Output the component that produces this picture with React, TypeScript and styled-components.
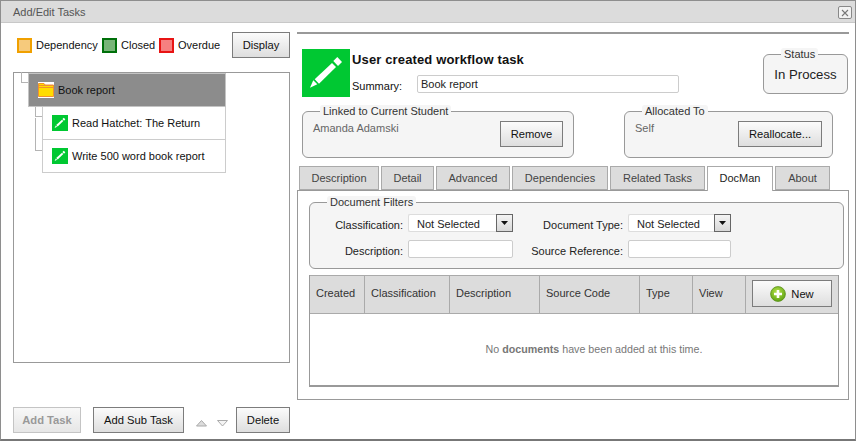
import React from "react";
import styled, { createGlobalStyle } from "styled-components";

const Global = createGlobalStyle`
  html, body { margin: 0; padding: 0; background: #fff; }
  * { box-sizing: border-box; }
  body { font-family: "Liberation Sans", Arial, sans-serif; font-size: 11px; color: #111; }
`;
const Win = styled.div`
  width: 856px; height: 441px; display: flex; flex-direction: column; overflow: hidden;
  border-left: 1px solid #8e8e8e; border-right: 1px solid #8e8e8e; border-top: 1px solid #8e8e8e; border-bottom: 2px solid #777;
  background: #fff;
`;
const TitleBar = styled.div`
  height: 22px; flex: none; background: #dcdcdc; border-bottom: 1px solid #c8c8c8; display: flex; align-items: center; justify-content: space-between;
  padding: 0 3px 0 12px; color: #555; font-size: 11px;
`;
const CloseBtn = styled.div`
  width: 14px; height: 13px; margin-top: 2px; border: 1px solid #888; border-radius: 2px; background: #f2f2f2; display: flex; align-items: center; justify-content: center;
`;
const Main = styled.div` flex: 1; display: flex; padding: 9px 0 0 12px; gap: 7px; min-height: 0; `;
const LeftCol = styled.div` width: 277px; flex: none; display: flex; flex-direction: column; `;
const LegendRow = styled.div` height: 26px; display: flex; align-items: center; padding-left: 4px; `;
const Swatch = styled.span<{ $b: string; $f: string }>`
  width: 15px; height: 15px; margin-right: 4px; border: 2px solid ${p => p.$b}; background: ${p => p.$f}; flex: none;
`;
const LegendText = styled.span<{ $w: number }>` width: ${p => p.$w}px; flex: none; white-space: nowrap; `;
const Btn = styled.button<{ $w: number; $h?: number; $disabled?: boolean }>`
  width: ${p => p.$w}px; height: ${p => p.$h ?? 26}px; flex: none; padding: 0; font: 11.2px "Liberation Sans", Arial, sans-serif;
  color: ${p => (p.$disabled ? "#999" : "#111")}; font-weight: ${p => (p.$disabled ? 700 : 400)};
  border: 1px solid ${p => (p.$disabled ? "#c4c4c4" : "#7c7c7c")};
  background: ${p => (p.$disabled ? "linear-gradient(#f8f8f8,#e6e6e6)" : "linear-gradient(#fbfbfb,#dedede)")};
  display: flex; align-items: center; justify-content: center; gap: 5px;
`;
const Tree = styled.div` margin-top: 14px; height: 291px; border: 1px solid #999; flex: none; `;
const RootNode = styled.div`
  position: relative; margin-left: 14px; width: 198px; height: 34px; background: #8c8c8c; border: 1px solid #c4c4c4;
  display: flex; align-items: center; padding: 0 0 1px 9px; gap: 4px; color: #111;
`;
const ChildNode = styled.div`
  position: relative; margin-left: 28px; width: 184px; height: 33px; border: 1px solid #ccc; border-top: none;
  display: flex; align-items: center; padding: 0 0 1px 9px; gap: 4px; color: #111;
`;
const Elbow = styled.span<{ $h: number; $b: number }>`
  position: absolute; left: -8px; bottom: ${p => p.$b}px; width: 7px; height: ${p => p.$h}px; border-left: 1px solid #b4b4b4; border-bottom: 1px solid #b4b4b4;
`;
const BottomBar = styled.div` margin-top: 44px; display: flex; align-items: center; `;
const BarGap = styled.div` width: 12px; flex: none; `;
const Arrows = styled.div` display: flex; gap: 10px; margin: 6px 8px 0 12px; `;
const RightCol = styled.div` width: 552px; flex: none; border-top: 2px solid #999; display: flex; flex-direction: column; `;
const Header = styled.div` height: 49px; margin-top: 14px; padding-left: 5px; display: flex; `;
const BigIcon = styled.div` width: 48px; height: 48px; margin-top: 1px; flex: none; background: #00c832; display: flex; `;
const HeadMain = styled.div` width: 413px; flex: none; padding-left: 2px; `;
const Title = styled.div` margin-top: 4px; font-size: 13px; font-weight: 700; color: #111; line-height: 16px; letter-spacing: .14px; `;
const SummaryRow = styled.div` margin-top: 7px; display: flex; align-items: center; height: 18px; `;
const SummaryLabel = styled.span` width: 65px; flex: none; padding-top: 4px; `;
const TextBox = styled.div<{ $w: number }>`
  width: ${p => p.$w}px; height: 18px; background: #fff; border: 1px solid #ccc; border-radius: 2px; padding-left: 3px; line-height: 16px; flex: none; color: #222;
`;
const Group = styled.fieldset<{ $w: number; $h: number; $ml?: number }>`
  width: ${p => p.$w}px; height: ${p => p.$h}px; margin: 0 0 0 ${p => p.$ml ?? 0}px; padding: 0; min-width: 0; flex: none;
  border: 1px solid #999; border-radius: 6px; background: #f5f5f5; color: #444;
`;
const GroupLegend = styled.legend<{ $ml?: number }>`
  margin-left: ${p => p.$ml ?? 17}px; padding: 0 3px; font-size: 11px; line-height: 13px; color: #333; background: #f5f5f5; border-radius: 3px;
`;
const StatusValue = styled.div` font-size: 13.2px; text-align: center; color: #222; margin-top: 6px; `;
const LinkRow = styled.div` margin-top: 8px; display: flex; `;
const GroupBody = styled.div` display: flex; justify-content: space-between; padding: 0 10px; `;
const GroupText = styled.span` padding-top: 4px; color: #666; `;
const GroupBtn = styled.div` margin-top: 3px; `;
const Tabs = styled.div` margin-top: 8px; padding-left: 2px; display: flex; gap: 2px; height: 25px; position: relative; z-index: 1; `;
const Tab = styled.div<{ $w: number; $active?: boolean }>`
  width: ${p => p.$w}px; height: ${p => (p.$active ? 25 : 24)}px; flex: none; text-align: center; line-height: 22px; color: ${p => (p.$active ? "#222" : "#444")};
  background: ${p => (p.$active ? "#fff" : "#dcdcdc")}; border: 1px solid #aaa; border-bottom: ${p => (p.$active ? "none" : "1px solid #aaa")};
`;
const Panel = styled.div`
  margin-top: -1px; height: 210px; border: 1px solid #999; padding: 5px 0 0 11px;
`;
const FilterGrid = styled.div`
  display: grid; grid-template-columns: 93px 105px 105px 103px; column-gap: 5px; row-gap: 8px; margin-top: 5px; align-items: center; grid-auto-rows: 18px;
`;
const FilterLabel = styled.span` text-align: right; white-space: nowrap; color: #222; padding-top: 3px; `;
const Select = styled.div`
  height: 18px; background: #fff; border: 1px solid #ddd; border-right: none; border-radius: 2px; padding-left: 8px; line-height: 18px; display: flex; justify-content: space-between; color: #222;
`;
const SelectArrow = styled.span`
  width: 17px; height: 18px; margin-top: -1px; flex: none; background: linear-gradient(#f4f4f4,#d8d8d8); border: 1px solid #666; display: flex; align-items: center; justify-content: center;
`;
const Table = styled.div` margin-top: 6px; width: 530px; height: 112px; border: 1px solid #999; border-bottom: 2px solid #999; border-top: 0; display: flex; flex-direction: column; `;
const THead = styled.div` height: 39px; background: #dcdcdc; display: flex; flex: none; `;
const Th = styled.div<{ $w: number }>`
  width: ${p => p.$w}px; flex: none; border-right: 1px solid #aaa; border-top: 1px solid #aaa; border-bottom: 1px solid #aaa; padding-left: 6px; line-height: 35px; color: #333; white-space: nowrap;
`;
const ThAction = styled.div`
  flex: 1; border-top: 1px solid #aaa; border-bottom: 1px solid #aaa; padding: 4px 0 0 6px;
`;
const Empty = styled.div` flex: 1; display: flex; align-items: center; justify-content: center; color: #777; font-size: 10.7px; padding: 0 0 1px 40px; `;
const BadgeIcon = styled.span` width: 16px; height: 16px; flex: none; background: #00c832; display: flex; `;

const Pencil = ({ s }: { s: number }) => (
  <svg width={s} height={s} viewBox="0 0 48 48">
    <path d="M8 38.7 L11.3 31.3 L15.3 35.3 Z" fill="#fff" />
    <path d="M12.7 30.3 L30 14 L34 18 L17 34.7 Z" fill="#fff" />
    <path d="M31.3 12 L35.3 8 L40 13 L36 17 Z" fill="#fff" />
  </svg>
);
const Folder = () => (
  <svg width="16" height="16" viewBox="0 0 16 16" style={{ flex: "none" }}>
    <rect width="16" height="16" fill="#fff" />
    <path d="M0.5 1.5 H6 L7 3 H15.5 V14.5 H0.5 Z" fill="#ffdc00" stroke="#f09030" />
    <path d="M0.5 3.5 H15.5 M0.5 5.5 H15.5" stroke="#f09030" fill="none" />
  </svg>
);
const Tri = ({ down }: { down?: boolean }) => (
  <svg width="11" height="7" viewBox="0 0 11 7">
    <path d={down ? "M0.5 0.5 H10.5 L5.5 6 Z" : "M0.5 6 H10.5 L5.5 0.5 Z"} fill={down ? "#f4f4f4" : "#dcdcdc"} stroke="#aaa" />
  </svg>
);
const PlusIcon = () => (
  <svg width="16" height="16" viewBox="0 0 16 16">
    <defs>
      <radialGradient id="pg" cx="0.45" cy="0.35" r="0.7"><stop offset="0" stopColor="#b5e34a" /><stop offset="1" stopColor="#5a9f10" /></radialGradient>
    </defs>
    <circle cx="8" cy="8" r="7.4" fill="url(#pg)" stroke="#5b8f1c" strokeWidth=".8" />
    <path d="M8 4 V12 M4 8 H12" stroke="#fff" strokeWidth="2.6" />
  </svg>
);
const ArrowGlyph = () => (
  <svg width="7" height="4" viewBox="0 0 7 4"><path d="M0 0 H7 L3.5 4 Z" fill="#111" /></svg>
);

export default function App() {
  return (
    <Win>
      <Global />
      <TitleBar>
        <span>Add/Edit Tasks</span>
        <CloseBtn>
          <svg width="8" height="8" viewBox="0 0 8 8"><path d="M1 1 L7 7 M7 1 L1 7" stroke="#777" strokeWidth="1.1" /></svg>
        </CloseBtn>
      </TitleBar>
      <Main>
        <LeftCol>
          <LegendRow>
            <Swatch $b="#f0a000" $f="#f6ca7c" />
            <LegendText $w={66}>Dependency</LegendText>
            <Swatch $b="#00700a" $f="#78b578" />
            <LegendText $w={38}>Closed</LegendText>
            <Swatch $b="#e81414" $f="#f68080" />
            <LegendText $w={54}>Overdue</LegendText>
            <Btn $w={58}>Display</Btn>
          </LegendRow>
          <Tree>
            <RootNode>
              <Elbow $h={11} $b={23} />
              <Folder />
              <span>Book report</span>
            </RootNode>
            <ChildNode>
              <Elbow $h={10} $b={22} />
              <BadgeIcon><Pencil s={16} /></BadgeIcon>
              <span>Read Hatchet: The Return</span>
            </ChildNode>
            <ChildNode>
              <Elbow $h={33} $b={21} />
              <BadgeIcon><Pencil s={16} /></BadgeIcon>
              <span>Write 500 word book report</span>
            </ChildNode>
          </Tree>
          <BottomBar>
            <Btn $w={68} $disabled>Add Task</Btn>
            <BarGap />
            <Btn $w={91}>Add Sub Task</Btn>
            <Arrows><Tri /><Tri down /></Arrows>
            <Btn $w={54}>Delete</Btn>
          </BottomBar>
        </LeftCol>
        <RightCol>
          <Header>
            <BigIcon><Pencil s={48} /></BigIcon>
            <HeadMain>
              <Title>User created workflow task</Title>
              <SummaryRow>
                <SummaryLabel>Summary:</SummaryLabel>
                <TextBox $w={262}>Book report</TextBox>
              </SummaryRow>
            </HeadMain>
            <Group $w={85} $h={46}>
              <GroupLegend>Status</GroupLegend>
              <StatusValue>In Process</StatusValue>
            </Group>
          </Header>
          <LinkRow>
            <Group $w={272} $h={53} $ml={5}>
              <GroupLegend>Linked to Current Student</GroupLegend>
              <GroupBody>
                <GroupText>Amanda Adamski</GroupText>
                <GroupBtn><Btn $w={63}>Remove</Btn></GroupBtn>
              </GroupBody>
            </Group>
            <Group $w={209} $h={53} $ml={50}>
              <GroupLegend>Allocated To</GroupLegend>
              <GroupBody>
                <GroupText>Self</GroupText>
                <GroupBtn><Btn $w={84}>Reallocate...</Btn></GroupBtn>
              </GroupBody>
            </Group>
          </LinkRow>
          <Tabs>
            <Tab $w={80}>Description</Tab>
            <Tab $w={53}>Detail</Tab>
            <Tab $w={74}>Advanced</Tab>
            <Tab $w={96}>Dependencies</Tab>
            <Tab $w={95}>Related Tasks</Tab>
            <Tab $w={66} $active>DocMan</Tab>
            <Tab $w={55}>About</Tab>
          </Tabs>
          <Panel>
            <Group $w={535} $h={73}>
              <GroupLegend>Document Filters</GroupLegend>
              <FilterGrid>
                <FilterLabel>Classification:</FilterLabel>
                <Select>Not Selected<SelectArrow><ArrowGlyph /></SelectArrow></Select>
                <FilterLabel>Document Type:</FilterLabel>
                <Select>Not Selected<SelectArrow><ArrowGlyph /></SelectArrow></Select>
                <FilterLabel>Description:</FilterLabel>
                <TextBox $w={105} />
                <FilterLabel>Source Reference:</FilterLabel>
                <TextBox $w={103} />
              </FilterGrid>
            </Group>
            <Table>
              <THead>
                <Th $w={55}>Created</Th>
                <Th $w={85}>Classification</Th>
                <Th $w={90}>Description</Th>
                <Th $w={100}>Source Code</Th>
                <Th $w={53}>Type</Th>
                <Th $w={53}>View</Th>
                <ThAction>
                  <Btn $w={80} $h={27}><PlusIcon />New</Btn>
                </ThAction>
              </THead>
              <Empty><span>No <b>documents</b> have been added at this time.</span></Empty>
            </Table>
          </Panel>
        </RightCol>
      </Main>
    </Win>
  );
}
